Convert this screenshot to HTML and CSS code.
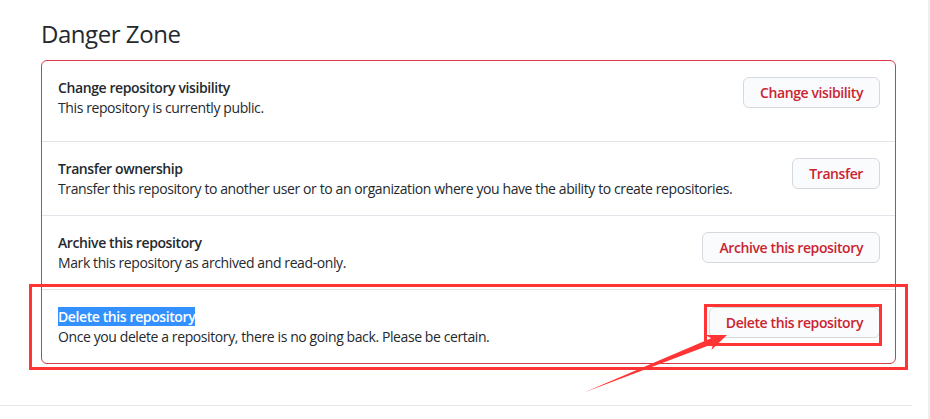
FILE: index.html
```html
<!DOCTYPE html>
<html>
<head>
<meta charset="utf-8">
<link rel="stylesheet" href="styles.css">
</head>
<body>
<div class="page">
  <div class="content">
    <h2 class="heading">Danger Zone</h2>
    <div class="box">
      <div class="row row-first">
        <div class="info">
          <strong class="title">Change repository visibility</strong>
          <p class="desc">This repository is currently public.</p>
        </div>
        <button class="btn">Change visibility</button>
      </div>
      <div class="row">
        <div class="info">
          <strong class="title">Transfer ownership</strong>
          <p class="desc">Transfer this repository to another user or to an organization where you have the ability to create repositories.</p>
        </div>
        <button class="btn">Transfer</button>
      </div>
      <div class="row">
        <div class="info">
          <strong class="title">Archive this repository</strong>
          <p class="desc">Mark this repository as archived and read-only.</p>
        </div>
        <button class="btn">Archive this repository</button>
      </div>
      <div class="row">
        <div class="info">
          <strong class="title"><span class="selected">Delete this repository</span></strong>
          <p class="desc">Once you delete a repository, there is no going back. Please be certain.</p>
        </div>
        <button class="btn btn-delete">Delete this repository</button>
      </div>
    </div>
  </div>
  <div class="footer-line"></div>
  <svg class="annot" width="930" height="419" viewBox="0 0 930 419">
    <rect x="30.5" y="285.5" width="876" height="83" fill="none" stroke="#ff3535" stroke-width="3"/>
    <rect x="705.5" y="305.5" width="175" height="39" fill="none" stroke="#ff3535" stroke-width="3"/>
    <polygon points="584,392.5 711.1,338.2 705.4,335.1 727,335 711.4,349.9 713.3,343.8" fill="#ff3535"/>
  </svg>
</div>
</body>
</html>
```
FILE: styles.css
```css
* { box-sizing: border-box; }
html, body { margin: 0; padding: 0; background: #fff; }
body {
  font-family: "Segoe UI", "Open Sans", "Noto Sans", sans-serif;
  color: #24292e;
  letter-spacing: -0.4px;
  width: 930px;
  height: 419px;
  overflow: hidden;
}
.page {
  position: relative;
  width: 930px;
  height: 419px;
  border-right: 2px solid #efefef;
}
.content {
  padding: 19px 0 0 41px;
  width: 896px;
}
.heading {
  margin: 0 0 11px 0;
  font-size: 24px;
  font-weight: 400;
  line-height: 30px;
  letter-spacing: -0.45px;
}
.box {
  border: 1px solid #d73a49;
  border-radius: 6px;
}
.row {
  display: flex;
  align-items: flex-start;
  justify-content: space-between;
  padding: 16px 15px 16px 16px;
  border-top: 1px solid #e1e4e8;
}
.row-first {
  border-top: 0;
  padding-bottom: 23px;
}
.info { display: flex; flex-direction: column; }
.title {
  font-size: 14px;
  font-weight: 600;
  line-height: 21px;
}
.desc {
  margin: 0;
  font-size: 14px;
  line-height: 20px;
}
.selected {
  background: #3390ff;
  color: #fff;
}
.btn {
  font-family: inherit;
  font-size: 14px;
  font-weight: 600;
  letter-spacing: -0.4px;
  line-height: 20px;
  height: 31px;
  padding: 4px 16px;
  color: #cb2431;
  background: #fafbfc;
  border: 1px solid #d5d8dc;
  border-radius: 6px;
  flex-shrink: 0;
}
.btn-delete { margin-top: 1px; }
.footer-line {
  margin-top: 41px;
  width: 912px;
  height: 1px;
  background: #e6e6e6;
}
.annot {
  position: absolute;
  left: 0;
  top: 0;
  pointer-events: none;
}
```
